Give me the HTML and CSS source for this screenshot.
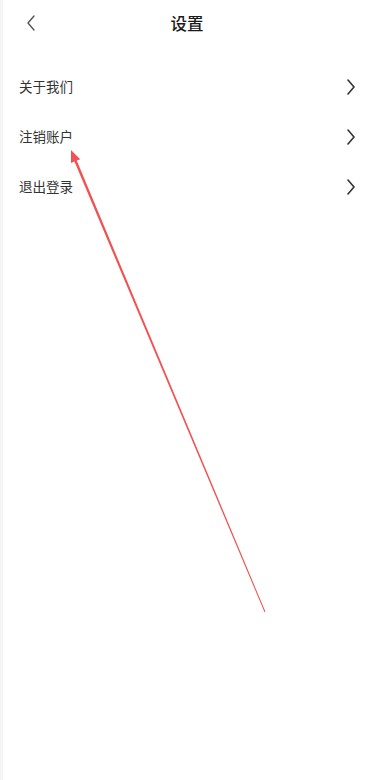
FILE: index.html
```html
<!DOCTYPE html>
<html lang="zh">
<head>
<meta charset="utf-8">
<title>设置</title>
<link rel="stylesheet" href="styles.css">
</head>
<body>
<div class="app">
  <header class="header">
    <span class="back">
      <svg width="10" height="16" viewBox="0 0 10 16"><path d="M8 1 L2 8 L8 15" fill="none" stroke="#555" stroke-width="1.4" stroke-linecap="round" stroke-linejoin="round"/></svg>
    </span>
    <h1 class="title">设置</h1>
  </header>
  <ul class="list">
    <li class="row"><span class="label">关于我们</span><svg class="chev" width="10" height="16" viewBox="0 0 10 16"><path d="M2 1 L8 8 L2 15" fill="none" stroke="#333" stroke-width="1.6" stroke-linecap="round" stroke-linejoin="round"/></svg></li>
    <li class="row"><span class="label">注销账户</span><svg class="chev" width="10" height="16" viewBox="0 0 10 16"><path d="M2 1 L8 8 L2 15" fill="none" stroke="#333" stroke-width="1.6" stroke-linecap="round" stroke-linejoin="round"/></svg></li>
    <li class="row"><span class="label">退出登录</span><svg class="chev" width="10" height="16" viewBox="0 0 10 16"><path d="M2 1 L8 8 L2 15" fill="none" stroke="#333" stroke-width="1.6" stroke-linecap="round" stroke-linejoin="round"/></svg></li>
  </ul>
  <svg class="annot" width="374" height="780" viewBox="0 0 374 780">
    <polygon fill="#f25252" points="71,150 80.2,159.2 76.75,160.6 265.46,611.8 264.54,612.2 74.45,161.6 71,163"/>
  </svg>
</div>
</body>
</html>
```
FILE: styles.css
```css
* { box-sizing: border-box; }
html, body { margin: 0; padding: 0; background: #fff; }
body {
  font-family: "Noto Sans CJK SC", "Noto Sans", sans-serif;
  color: #333;
}
.app {
  position: relative;
  width: 374px;
  height: 780px;
  border-left: 3px solid #f5f5f5;
  background: #fff;
  overflow: hidden;
}
.header {
  position: relative;
  height: 46px;
  display: flex;
  align-items: center;
  justify-content: center;
}
.back {
  position: absolute;
  left: 23px;
  top: 15px;
  display: flex;
}
.title {
  margin: 0;
  font-size: 16.5px;
  font-weight: 500;
  color: #1a1a1a;
  line-height: 1;
  margin-left: -3px;
}
.list {
  list-style: none;
  margin: 0;
  padding: 16px 0 0 0;
}
.row {
  height: 50px;
  display: flex;
  align-items: center;
  justify-content: space-between;
  padding: 0 18px 0 16px;
}
.label {
  font-size: 13.5px;
  color: #333;
  line-height: 1;
}
.chev { display: block; }
.annot {
  position: absolute;
  left: -3px;
  top: 0;
  pointer-events: none;
}
```
